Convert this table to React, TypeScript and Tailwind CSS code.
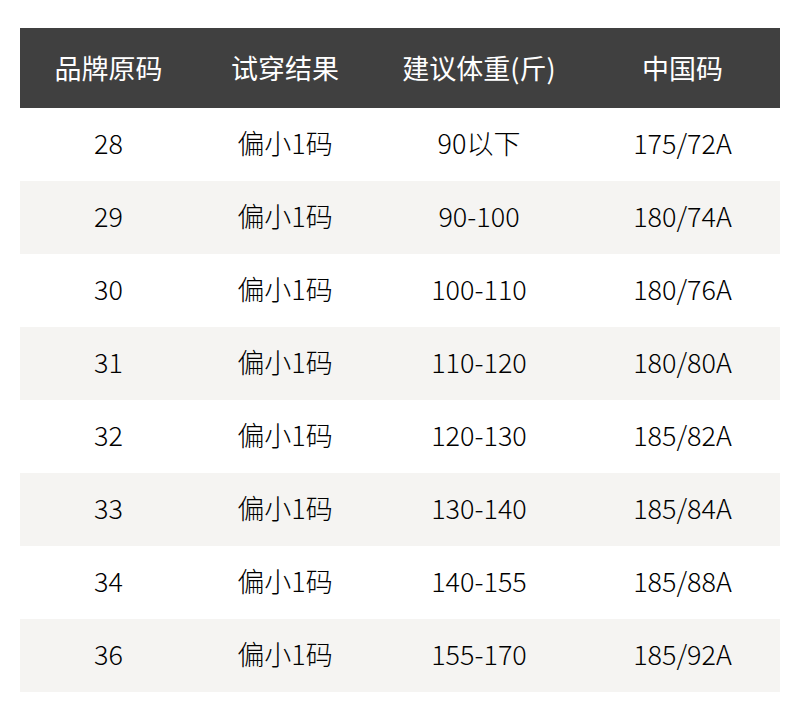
const rows = [
  ["28", "偏小1码", "90以下", "175/72A"],
  ["29", "偏小1码", "90-100", "180/74A"],
  ["30", "偏小1码", "100-110", "180/76A"],
  ["31", "偏小1码", "110-120", "180/80A"],
  ["32", "偏小1码", "120-130", "185/82A"],
  ["33", "偏小1码", "130-140", "185/84A"],
  ["34", "偏小1码", "140-155", "185/88A"],
  ["36", "偏小1码", "155-170", "185/92A"],
];

const headers = ["品牌原码", "试穿结果", "建议体重(斤)", "中国码"];

export default function App() {
  return (
    <div
      className="w-[800px] h-[721px] bg-white pt-[28px] px-[20px]"
      style={{ fontFamily: '"Noto Sans CJK SC", "Noto Sans", sans-serif' }}
    >
      <div className="grid grid-cols-[177px_176px_212px_195px] h-[80px] bg-[#404040] text-white text-[27px] items-center text-center">
        {headers.map((h) => (
          <div key={h}>{h}</div>
        ))}
      </div>
      {rows.map((r, i) => (
        <div
          key={r[0]}
          className={`grid grid-cols-[177px_176px_212px_195px] h-[73px] items-center text-center text-[27px] font-light text-black ${
            i % 2 === 1 ? "bg-[#f5f4f2]" : "bg-white"
          }`}
        >
          {r.map((c, j) => (
            <div key={j} className="-mt-[2px]">{c}</div>
          ))}
        </div>
      ))}
    </div>
  );
}
